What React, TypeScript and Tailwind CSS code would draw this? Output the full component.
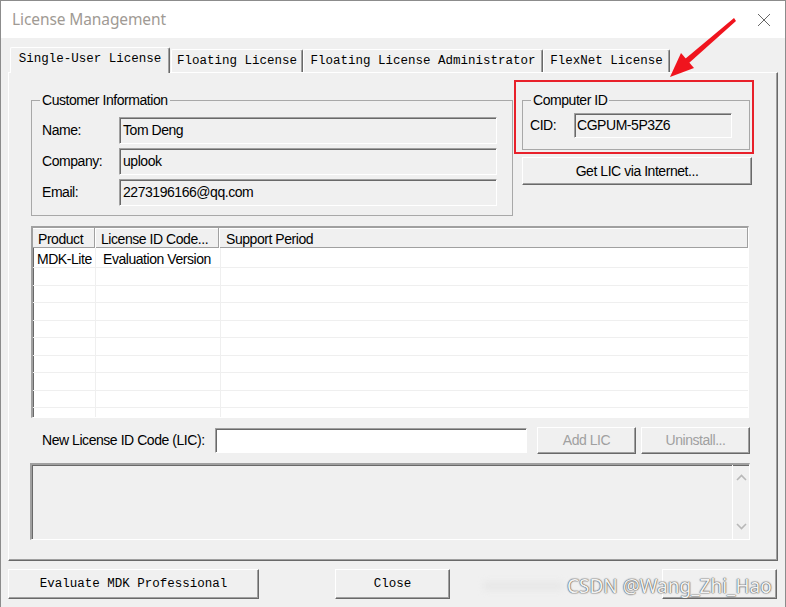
import React from "react";

const sunken =
  "border-t border-l border-t-[#a0a0a0] border-l-[#a0a0a0] border-b border-r border-b-white border-r-white shadow-[inset_1px_1px_0_#696969]";
const raised =
  "border-t border-l border-t-white border-l-white border-b border-r border-b-[#696969] border-r-[#696969] shadow-[inset_-1px_-1px_0_#a0a0a0]";
const uiBase = "font-['Liberation_Sans',Arial,sans-serif] text-[14px] tracking-[-0.45px]";
const ui = `${uiBase} text-black`;
const mono = "font-['Liberation_Mono','DejaVu_Sans_Mono',monospace] text-[12.5px] tracking-[0px] text-black";

function Tab({ label, w, selected }: { label: string; w: string; selected?: boolean }) {
  return (
    <div
      className={`${w} ${
        selected ? "h-[26px] relative z-10 -mb-[1px] pb-[2px]" : "h-[23px]"
      } border-t border-l border-t-white border-l-white border-r border-r-[#696969] shadow-[inset_-1px_0_0_#a0a0a0] rounded-t-[2px] bg-[#f0f0f0] flex items-center justify-center ${mono}`}
    >
      {label}
    </div>
  );
}

function Field({ label, value }: { label: string; value: string }) {
  return (
    <div className="flex items-center h-[27px]">
      <div className={`w-[77px] ${ui}`}>{label}</div>
      <div className={`w-[378px] h-[27px] ${sunken} bg-[#f0f0f0] pl-[3px] pt-[4px] leading-[16px] ${ui}`}>{value}</div>
    </div>
  );
}

export default function App() {
  const rows = Array.from({ length: 9 });
  return (
    <div className="relative w-[786px] h-[607px] bg-[#f0f0f0] border-l border-t border-r border-[#8c8c8c] overflow-hidden flex flex-col">
      {/* title bar */}
      <div className="h-[37px] bg-white flex items-center justify-between pl-[11px] pr-[14px] shrink-0">
        <span className="font-['Noto_Sans','Open_Sans',sans-serif] text-[15.5px] text-[#a09a94] tracking-[-0.1px]">
          License Management
        </span>
        <svg width="14" height="14" viewBox="0 0 14 14" className="mt-[1px]">
          <path d="M1 1 L13 13 M13 1 L1 13" stroke="#666" strokeWidth="1" fill="none" />
        </svg>
      </div>

      {/* body */}
      <div className="flex-1 flex flex-col pl-[7px] pt-[8px]">
        {/* tabs */}
        <div className="flex items-end h-[26px] pl-[2px]">
          <Tab label="Single-User License" w="w-[160px]" selected />
          <div className="w-[1px]" />
          <Tab label="Floating License" w="w-[132px]" />
          <Tab label="Floating License Administrator" w="w-[240px]" />
          <Tab label="FlexNet License" w="w-[127px]" />
        </div>

        {/* panel */}
        <div className={`w-[770px] h-[489px] ${raised} bg-[#f0f0f0] pt-[19px] pl-[22px] flex flex-col`}>
          {/* row 1 */}
          <div className="flex items-start">
            <fieldset className="w-[482px] h-[124px] border border-[#a8a8a8]">
              <legend className={`ml-[8px] px-[2px] leading-[16px] ${ui}`}>Customer Information</legend>
              <div className="pl-[10px] pt-[9px] flex flex-col gap-[4px]">
                <Field label="Name:" value="Tom Deng" />
                <Field label="Company:" value="uplook" />
                <Field label="Email:" value="2273196166@qq.com" />
              </div>
            </fieldset>

            <div className="relative ml-[9px] w-[229px] flex flex-col">
              <fieldset className="w-[228px] h-[58px] border border-[#a8a8a8]">
                <legend className={`ml-[8px] px-[2px] leading-[16px] ${ui}`}>Computer ID</legend>
                <div className="flex items-center pl-[7px] pt-[5px]">
                  <div className={`w-[44px] ${ui}`}>CID:</div>
                  <div className={`w-[158px] h-[25px] ${sunken} bg-[#f0f0f0] pl-[2px] pt-[3px] leading-[16px] ${ui}`}>
                    CGPUM-5P3Z6
                  </div>
                </div>
              </fieldset>
              <button className={`mt-[7px] w-[230px] h-[28px] ${raised} bg-[#f0f0f0] ${ui}`}>Get LIC via Internet...</button>
              {/* red annotation box */}
              <div className="absolute left-[-8px] top-[-12px] w-[240px] h-[74px] border-2 border-[#e8202a]" />
            </div>
          </div>

          {/* table */}
          <div className={`mt-[10px] w-[718px] h-[192px] ${sunken} border-t-2 border-l-2 bg-white overflow-hidden flex flex-col`}>
            <div className="h-[20px] flex bg-[#f0f0f0] shrink-0 shadow-[inset_0_-1px_0_#a0a0a0,inset_0_1px_0_#fff]">
              <div className={`w-[62px] border-r border-r-[#a0a0a0] pl-[5px] pt-[2px] leading-[18px] ${ui}`}>Product</div>
              <div className={`w-[124px] border-l border-l-white border-r border-r-[#a0a0a0] pl-[5px] pt-[2px] leading-[18px] ${ui}`}>
                License ID Code...
              </div>
              <div className={`flex-1 border-l border-l-white border-r border-r-[#a0a0a0] pl-[6px] pt-[2px] leading-[18px] ${ui}`}>
                Support Period
              </div>
            </div>
            <div className="flex flex-col">
              <div className="h-[20px] flex border-b border-b-[#efefef] shrink-0">
                <div className={`w-[63px] border-r border-r-[#efefef] pl-[4px] pt-[2px] leading-[18px] ${ui}`}>MDK-Lite</div>
                <div className={`w-[125px] border-r border-r-[#efefef] pl-[7px] pt-[2px] leading-[18px] ${ui}`}>Evaluation Version</div>
                <div className="flex-1" />
              </div>
              {rows.map((_, i) => (
                <div key={i} className="h-[17.5px] flex border-b border-b-[#efefef] shrink-0">
                  <div className="w-[63px] border-r border-r-[#efefef]" />
                  <div className="w-[125px] border-r border-r-[#efefef]" />
                  <div className="flex-1" />
                </div>
              ))}
            </div>
          </div>

          {/* LIC row */}
          <div className="mt-[9px] h-[27px] flex items-center pl-[11px]">
            <div className={`w-[173px] shrink-0 whitespace-nowrap ${ui}`}>New License ID Code (LIC):</div>
            <div className={`w-[312px] h-[25px] shrink-0 ${sunken} bg-white`} />
            <button className={`ml-[10px] w-[99px] h-[27px] shrink-0 ${raised} bg-[#f0f0f0] ${uiBase} text-[#a0a0a0]`}>Add LIC</button>
            <button className={`ml-[5px] w-[109px] h-[27px] shrink-0 ${raised} bg-[#f0f0f0] ${uiBase} text-[#a0a0a0]`}>Uninstall...</button>
          </div>

          {/* message area */}
          <div className={`mt-[9px] -ml-[1px] w-[720px] h-[77px] ${sunken} border-t-2 border-l-2 bg-[#f0f0f0] flex justify-end`}>
            <div className="w-[17px] h-full border-l border-l-white flex flex-col items-center justify-between py-[9px]">
              <svg width="11" height="7" viewBox="0 0 11 7">
                <path d="M1 6 L5.5 1.5 L10 6" stroke="#b8b8b8" strokeWidth="1.6" fill="none" />
              </svg>
              <svg width="11" height="7" viewBox="0 0 11 7">
                <path d="M1 1 L5.5 5.5 L10 1" stroke="#b8b8b8" strokeWidth="1.6" fill="none" />
              </svg>
            </div>
          </div>
        </div>

        {/* bottom buttons */}
        <div className="mt-[8px] flex">
          <button className={`w-[251px] h-[30px] ${raised} bg-[#f0f0f0] ${mono}`}>Evaluate MDK Professional</button>
          <button className={`ml-[76px] w-[115px] h-[30px] ${raised} bg-[#f0f0f0] ${mono}`}>Close</button>
          <div className={`ml-[212px] w-[115px] h-[30px] ${raised} bg-[#f0f0f0]`} />
        </div>
      </div>

      {/* red arrow annotation */}
      <svg className="absolute left-0 top-0 pointer-events-none" width="786" height="607" viewBox="0 0 786 607">
        <path d="M733 17 L735 20 L688 62 L684 58 Z" fill="#f0141e" />
        <polygon points="669,76 680,52 693,67" fill="#f0141e" />
      </svg>

      {/* watermark */}
      <div className="absolute left-[482px] top-[580px] w-[80px] h-[10px] bg-[#e6e6e6] blur-[3px] opacity-70" />
      <div className="absolute left-[566px] top-[571px] font-['Noto_Sans','Open_Sans',sans-serif] text-[19px] text-[#f2f2f2] [text-shadow:0_0_1px_#555,0_0_1px_#555,0_0_2px_#888] whitespace-nowrap">
        CSDN @Wang_Zhi_Hao
      </div>
    </div>
  );
}
